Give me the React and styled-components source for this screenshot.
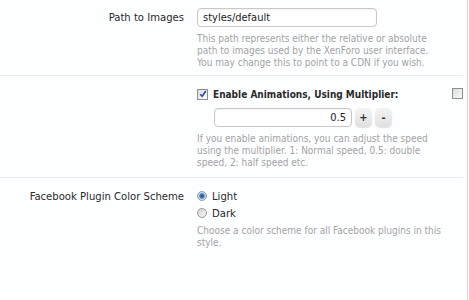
import React from 'react';
import styled, { createGlobalStyle } from 'styled-components';

const Global = createGlobalStyle`
  body {
    margin: 0;
    background: #fff;
    font-family: Tahoma, "DejaVu Sans Condensed", "DejaVu Sans", sans-serif;
  }
`;

const Page = styled.div`
  width: 467px;
  height: 300px;
  border-right: 1px solid #c9d9e6;
  background: #fdfeff;
`;

const Rows = styled.div`
  width: 463px;
`;

const Row = styled.div`
  display: grid;
  grid-template-columns: 184px minmax(0, 1fr) 20px;
  column-gap: 13px;
  padding: ${p => p.pad || '8px 0'};
  border-bottom: ${p => (p.last ? 'none' : '1px solid #e3edf3')};
`;

const Label = styled.div`
  text-align: right;
  font-size: 11.2px;
  color: #2a2a2a;
  padding-top: ${p => p.top || '3px'};
  white-space: nowrap;
`;

const Field = styled.div`
  display: flex;
  flex-direction: column;
  align-items: flex-start;
  min-width: 0;
`;

const TextBox = styled.input`
  box-sizing: border-box;
  width: ${p => p.w || '180px'};
  height: 19px;
  border: 1px solid #c8c8c8;
  border-radius: 4px;
  padding: 0 5px;
  font-family: inherit;
  font-size: 11px;
  color: #222;
  text-align: ${p => p.align || 'left'};
  background: #fff;
  box-shadow: inset 0 1px 2px rgba(0, 0, 0, 0.06);
  outline: none;
`;

const Explain = styled.p`
  margin: ${p => p.m || '6px 0 0'};
  font-size: 10px;
  line-height: 12px;
  color: #a3a3a3;
  width: 244px;
`;

const CheckLine = styled.label`
  display: flex;
  align-items: center;
  gap: 5px;
  font-size: 10px;
  font-weight: bold;
  color: #2a2a2a;
  height: 12px;
`;

const Box = styled.span`
  width: 9px;
  height: 9px;
  border: 1px solid #8e8f8f;
  background: linear-gradient(135deg, #dcdcdc, #fbfbfb);
  display: flex;
  align-items: center;
  justify-content: center;
  flex: none;
`;

const Spinner = styled.div`
  display: flex;
  gap: 3px;
  margin: 8px 0 0 17px;
`;

const SpinButton = styled.span`
  width: 17px;
  height: 19px;
  border-radius: 5px;
  background: linear-gradient(#f4f4f4, #e0e0e0);
  box-shadow: 0 1px 1px rgba(0, 0, 0, 0.12);
  font-size: 11px;
  color: #333;
  display: flex;
  align-items: center;
  justify-content: center;
  font-weight: bold;
`;

const Side = styled.div`
  display: flex;
  justify-content: flex-end;
`;

const RadioLine = styled.label`
  display: flex;
  align-items: center;
  gap: 5px;
  font-size: 11.2px;
  color: #2a2a2a;
  height: 12px;
  margin-bottom: ${p => p.mb || '5px'};
`;

const Dot = styled.span`
  width: 10px;
  height: 10px;
  border-radius: 50%;
  border: 1px solid #9a9a9a;
  box-sizing: border-box;
  background: ${p =>
    p.on
      ? 'radial-gradient(circle, #1e4f7a 0, #3f7fb4 2px, #c9dcec 3.5px, #eef3f7 5px)'
      : 'linear-gradient(135deg, #d5d5d5, #f6f6f6)'};
  flex: none;
`;

const Tick = () => (
  <svg width="8" height="8" viewBox="0 0 8 8">
    <path d="M1.2 4.2 L3.2 6.3 L6.8 1" fill="none" stroke="#2b4a9a" strokeWidth="1.6" />
  </svg>
);

export default function App() {
  return (
    <Page>
      <Global />
      <Rows>
        <Row pad="8px 0 6px">
          <Label>Path to Images</Label>
          <Field>
            <TextBox defaultValue="styles/default" />
            <Explain>
              This path represents either the relative or absolute path to images used by the
              XenForo user interface. You may change this to point to a CDN if you wish.
            </Explain>
          </Field>
          <div />
        </Row>

        <Row pad="12px 0 8px">
          <Label />
          <Field>
            <CheckLine>
              <Box><Tick /></Box>
              Enable Animations, Using Multiplier:
            </CheckLine>
            <Spinner>
              <TextBox w="138px" align="right" defaultValue="0.5" />
              <SpinButton>+</SpinButton>
              <SpinButton>-</SpinButton>
            </Spinner>
            <Explain>
              If you enable animations, you can adjust the speed using the multiplier. 1: Normal
              speed, 0.5: double speed, 2: half speed etc.
            </Explain>
          </Field>
          <Side>
            <Box />
          </Side>
        </Row>

        <Row pad="12px 0 8px" last>
          <Label top="0">Facebook Plugin Color Scheme</Label>
          <Field>
            <RadioLine>
              <Dot on />
              Light
            </RadioLine>
            <RadioLine mb="6px">
              <Dot />
              Dark
            </RadioLine>
            <Explain m="0">
              Choose a color scheme for all Facebook plugins in this style.
            </Explain>
          </Field>
          <div />
        </Row>
      </Rows>
    </Page>
  );
}
